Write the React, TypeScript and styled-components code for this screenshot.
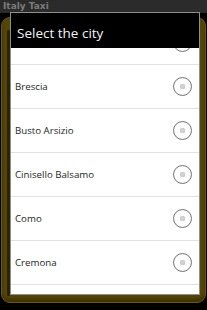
import styled, { createGlobalStyle } from 'styled-components';

const cities = ['Bergamo', 'Brescia', 'Busto Arsizio', 'Cinisello Balsamo', 'Como', 'Cremona', 'Ferrara'];

const GlobalStyle = createGlobalStyle`
  html, body {
    margin: 0;
    padding: 0;
    background: #000;
  }
  body {
    font-family: "Open Sans", "Noto Sans", sans-serif;
    overflow: hidden;
  }
`;

const Screen = styled.div`
  position: relative;
  width: 207px;
  height: 310px;
  overflow: hidden;
  background: #000;
  display: flex;
  flex-direction: column;
`;

const AppBar = styled.div`
  height: 13px;
  background: #2b2b2b;
  color: #7c7c7c;
  font-family: "DejaVu Sans", sans-serif;
  font-weight: bold;
  font-size: 9px;
  line-height: 13px;
  padding-left: 3px;
`;

const Backdrop = styled.div`
  flex: 1;
  padding: 4px 1px 7px 1px;
  display: flex;
`;

const Panel = styled.div`
  flex: 1;
  border-radius: 9px;
  background: #544508;
  border: 1px solid #6a5912;
  box-shadow: inset 0 -3px 3px #3e3304;
  padding: 12px 0 6px 5px;
  display: flex;
`;

const PanelStrip = styled.div`
  width: 3px;
  background: #2a2304;
  border-radius: 1px;
`;

const Dialog = styled.div`
  position: absolute;
  left: 10px;
  top: 12px;
  width: 188px;
  height: 281px;
  border: 1px solid #8e8e8e;
  background: #fff;
  display: flex;
  flex-direction: column;
  overflow: hidden;
`;

const DialogTitle = styled.div`
  height: 35px;
  box-sizing: border-box;
  padding: 4px 0 0 6px;
  background: #000;
  color: #f2f2f2;
  font-size: 13.5px;
  display: flex;
  align-items: center;
  flex-shrink: 0;
`;

const List = styled.div`
  flex: 1;
  overflow: hidden;
  background: #fff;
`;

const Row = styled.div<{ $offset?: number }>`
  height: 43px;
  margin-top: ${p => (p.$offset ? `${p.$offset}px` : '0')};
  border-bottom: 1px solid #e2e2e2;
  display: flex;
  align-items: center;
  justify-content: space-between;
  padding: 0 7px 0 4px;
  color: #262626;
  font-size: 9.7px;
`;

const Radio = styled.span`
  width: 17px;
  height: 17px;
  border-radius: 50%;
  border: 1px solid #747474;
  background: radial-gradient(circle, #fafafa 0%, #fff 55%, #e8e8e8 100%);
  display: flex;
  align-items: center;
  justify-content: center;
`;

const Dot = styled.span`
  width: 5px;
  height: 5px;
  border-radius: 50%;
  background: #d4d4d4;
  box-shadow: inset 0 0 1px #999;
`;

export default function App() {
  return (
    <>
      <GlobalStyle />
      <Screen>
        <AppBar>Italy Taxi</AppBar>
        <Backdrop>
          <Panel>
            <PanelStrip />
          </Panel>
        </Backdrop>
        <Dialog>
          <DialogTitle>Select the city</DialogTitle>
          <List>
            {cities.map((city, i) => (
              <Row key={city} $offset={i === 0 ? -27 : 0}>
                {city}
                <Radio>
                  <Dot />
                </Radio>
              </Row>
            ))}
          </List>
        </Dialog>
      </Screen>
    </>
  );
}
